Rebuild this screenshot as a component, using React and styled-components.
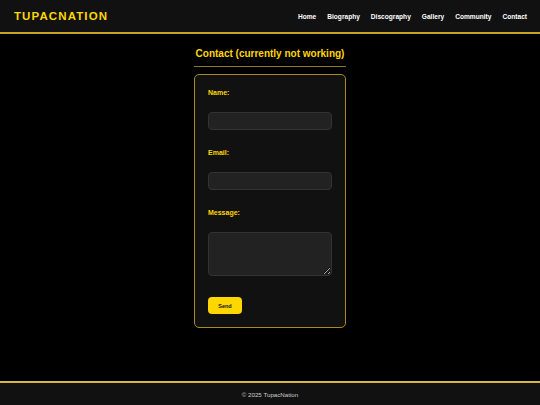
import React from "react";
import styled, { createGlobalStyle } from "styled-components";

const Global = createGlobalStyle`
  html, body { margin: 0; padding: 0; background: #000; }
  body { font-family: "Liberation Sans", Arial, sans-serif; }
  * { box-sizing: border-box; }
`;

const Page = styled.div`
  min-height: 100vh;
  display: flex;
  flex-direction: column;
  background: #000;
`;

const Header = styled.header`
  height: 34px;
  background: #111;
  border-bottom: 2px solid #c9a227;
  display: flex;
  align-items: center;
  justify-content: space-between;
  padding: 0 13px 0 14px;
`;

const Logo = styled.div`
  color: #ffd700;
  font-weight: bold;
  font-size: 11.5px;
  letter-spacing: 1.1px;
`;

const Nav = styled.nav`
  display: flex;
  gap: 11px;
`;

const NavLink = styled.a`
  color: #fff;
  font-weight: bold;
  font-size: 6.6px;
  text-decoration: none;
`;

const Main = styled.main`
  flex: 1;
  display: flex;
  flex-direction: column;
  align-items: center;
  padding-top: 14px;
`;

const Section = styled.section`
  width: 152px;
`;

const Title = styled.h2`
  margin: 0 0 7px;
  color: #ffd700;
  font-size: 10px;
  line-height: 11.5px;
  font-weight: bold;
  text-align: center;
  white-space: nowrap;
  padding-bottom: 6px;
  border-bottom: 1px solid #8f7a22;
`;

const Card = styled.form`
  background: #111;
  border: 1px solid #a88a1e;
  border-radius: 5px;
  padding: 14px 13px 13px;
  display: flex;
  flex-direction: column;
`;

const Label = styled.label`
  display: block;
  color: #ffd700;
  font-size: 7px;
  font-weight: bold;
  line-height: 8px;
  margin-bottom: 15.5px;
`;

const Input = styled.input`
  display: block;
  width: 100%;
  height: 18px;
  background: #222;
  border: 1px solid #333;
  border-radius: 4px;
  margin: 0 0 18.5px;
  outline: none;
`;

const TextArea = styled.textarea`
  display: block;
  width: 100%;
  height: 44px;
  background: #222;
  border: 1px solid #333;
  border-radius: 4px;
  margin: 0 0 21px;
  resize: vertical;
  outline: none;
`;

const Button = styled.button`
  align-self: flex-start;
  width: 34px;
  height: 17px;
  background: #ffd700;
  color: #111;
  border: none;
  border-radius: 4px;
  font-family: "Liberation Sans", Arial, sans-serif;
  font-weight: bold;
  font-size: 5.5px;
  padding: 0;
`;

const Footer = styled.footer`
  height: 24px;
  background: #111;
  border-top: 2px solid #d4b84a;
  display: flex;
  align-items: center;
  justify-content: center;
  color: #ccc;
  font-size: 6.2px;
`;

const links = ["Home", "Biography", "Discography", "Gallery", "Community", "Contact"];

export default function App() {
  return (
    <>
      <Global />
      <Page>
        <Header>
          <Logo>TUPACNATION</Logo>
          <Nav>
            {links.map((l) => (
              <NavLink key={l} href="#">{l}</NavLink>
            ))}
          </Nav>
        </Header>
        <Main>
          <Section>
            <Title>Contact (currently not working)</Title>
            <Card onSubmit={(e) => e.preventDefault()}>
              <Label htmlFor="name">Name:</Label>
              <Input id="name" type="text" />
              <Label htmlFor="email">Email:</Label>
              <Input id="email" type="email" />
              <Label htmlFor="message">Message:</Label>
              <TextArea id="message" />
              <Button type="submit">Send</Button>
            </Card>
          </Section>
        </Main>
        <Footer>© 2025 TupacNation</Footer>
      </Page>
    </>
  );
}
